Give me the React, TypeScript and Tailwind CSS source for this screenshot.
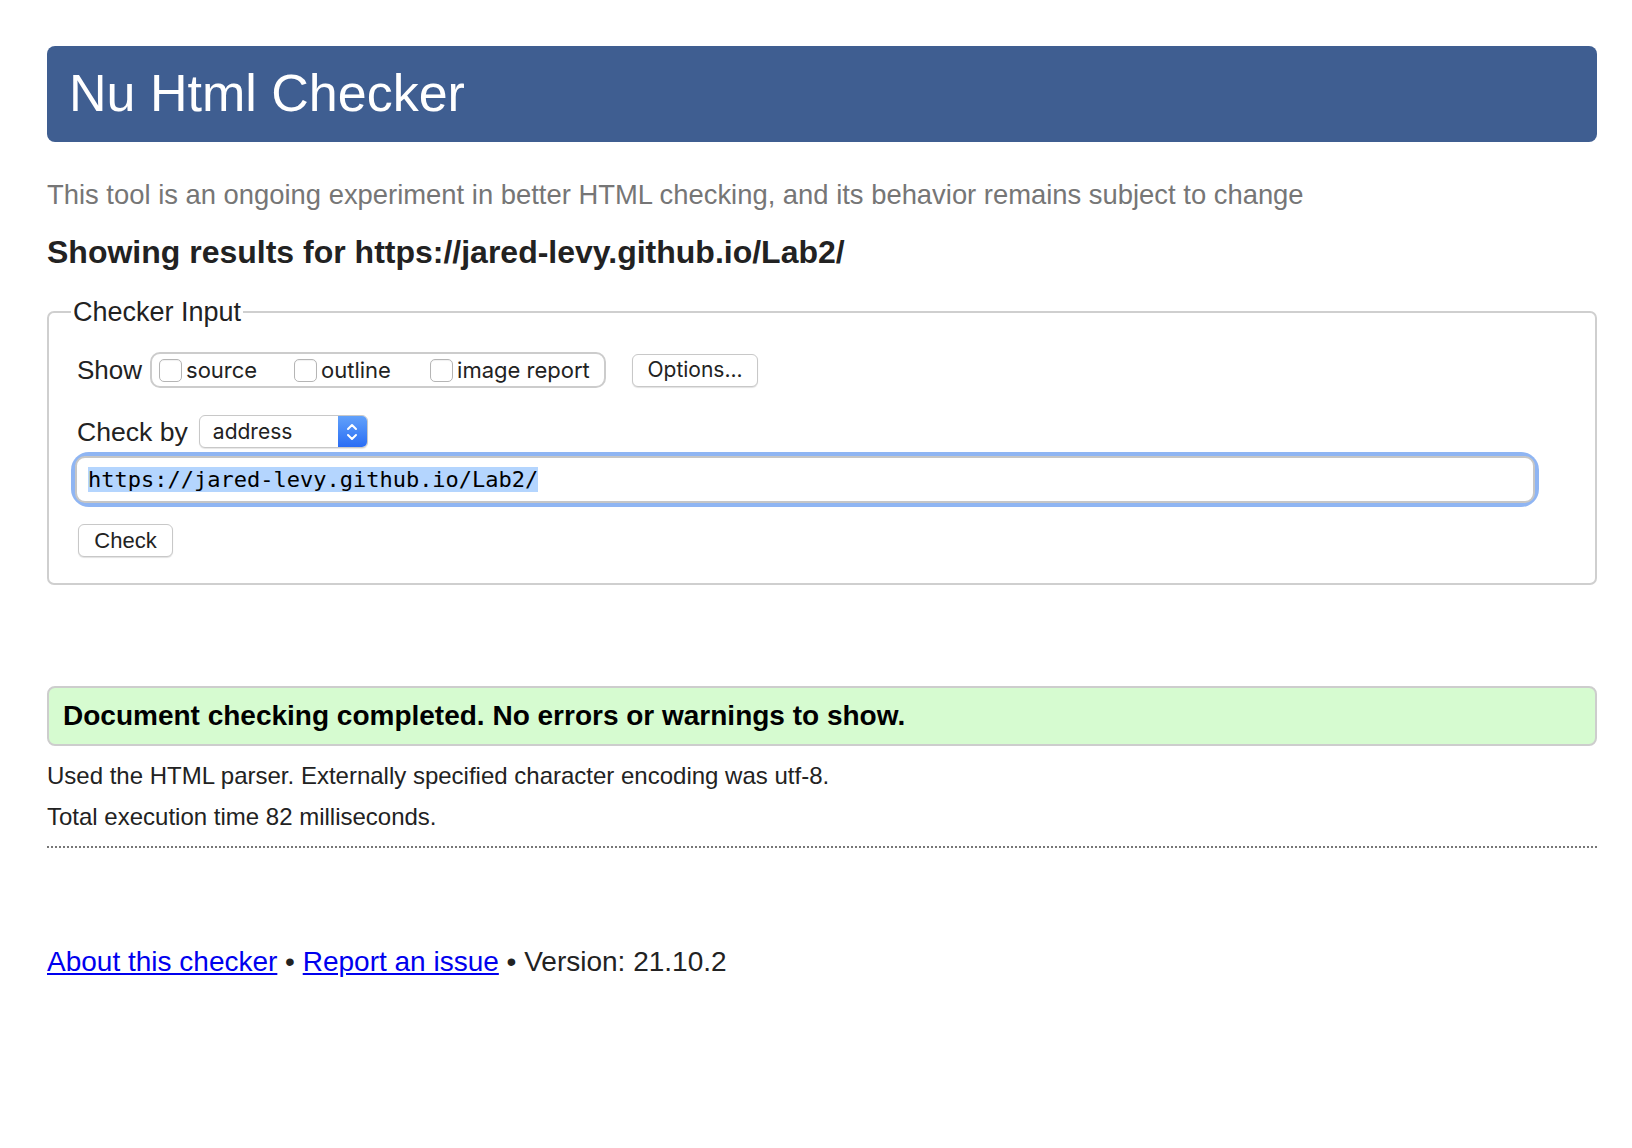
export default function App() {
  return (
    <div className="min-h-[1148px] bg-white font-['Liberation_Sans',Arial,sans-serif] text-[#222]">
      <div className="ml-[47px] mr-[35px] pt-[46px]">
        <header className="flex h-[96px] items-center rounded-[8px] bg-[#3f5e91] pl-[22px] pb-[3px]">
          <h1 className="text-[52px] leading-none text-white">Nu Html Checker</h1>
        </header>

        <p className="mt-[37px] text-[27.4px] leading-[32px] text-[#767676]">
          This tool is an ongoing experiment in better HTML checking, and its behavior remains subject to change
        </p>
        <h2 className="mt-[22px] text-[32px] font-bold leading-[38px] text-[#222]">
          Showing results for https://jared-levy.github.io/Lab2/
        </h2>

        <CheckerInput />

        <div className="mt-[101px] flex h-[60px] items-center rounded-[8px] border-2 border-[#cdcdcd] bg-[#d6fbd0] pl-[14px]">
          <p className="text-[28px] font-bold leading-none text-black">
            Document checking completed. No errors or warnings to show.
          </p>
        </div>
        <p className="mt-[15px] text-[24px] leading-[30px] text-[#222]">
          Used the HTML parser. Externally specified character encoding was utf-8.
        </p>
        <p className="mt-[11px] text-[24px] leading-[30px] text-[#222]">
          Total execution time 82 milliseconds.
        </p>
        <div className="mt-[14px] border-b-2 border-dotted border-[#777]" />

        <p className="mt-[97px] text-[28px] leading-[34px] text-[#222]">
          <a href="#" className="text-[#0000ee] underline">About this checker</a>
          {" • "}
          <a href="#" className="text-[#0000ee] underline">Report an issue</a>
          {" • Version: 21.10.2"}
        </p>
      </div>
    </div>
  );
}

function CheckerInput() {
  return (
    <fieldset className="mt-[25px] rounded-[7px] border-2 border-[#cfcfcf] pl-[28px] pr-[12px] pb-[26px] pt-[24px]">
      <legend className="ml-[-6px] px-[2px] text-[27px] leading-[32px] text-[#222]">Checker Input</legend>

      <div className="flex items-center">
        <span className="text-[26px] leading-[32px]">Show</span>
        <div className="ml-[8px] flex h-[36px] w-[456px] items-center rounded-[10px] border-2 border-[#cccccc] pl-[7px] font-['Inter',sans-serif] text-[22px] text-[#222]">
          <label className="flex w-[135px] items-center gap-[4px]">
            <Checkbox />
            source
          </label>
          <label className="flex w-[136px] items-center gap-[4px]">
            <Checkbox />
            outline
          </label>
          <label className="flex items-center gap-[4px]">
            <Checkbox />
            image report
          </label>
        </div>
        <button className="ml-[26px] flex h-[33px] w-[126px] items-center justify-center rounded-[6px] border border-[#c8c8c8] bg-white font-['Inter',sans-serif] text-[21px] text-[#222] shadow-[0_1px_1px_rgba(0,0,0,0.12)]">
          Options...
        </button>
      </div>

      <div className="mt-[27px] flex items-center">
        <span className="text-[26.6px] leading-[32px]">Check by</span>
        <div className="ml-[11px] flex h-[33px] w-[169px] items-stretch overflow-hidden rounded-[6px] border border-[#c8c8c8] bg-white shadow-[0_1px_1px_rgba(0,0,0,0.1)]">
          <span className="flex flex-1 items-center pl-[13px] font-['Inter',sans-serif] text-[21px] text-[#222]">address</span>
          <span className="flex w-[29px] items-center justify-center bg-gradient-to-b from-[#62a1fa] to-[#2a6cf4]">
            <svg width="12" height="22" viewBox="0 0 12 22" fill="none" stroke="white" strokeWidth="2" strokeLinecap="round" strokeLinejoin="round">
              <path d="M2 8 L6 4 L10 8" />
              <path d="M2 14 L6 18 L10 14" />
            </svg>
          </span>
        </div>
      </div>

      <div className="ml-[-2px] mr-[48px] mt-[8px] rounded-[14px] ring-4 ring-[#8fb5f3]">
        <div className="flex h-[47px] items-center rounded-[10px] border-2 border-[#c6c6c6] bg-white pl-[11px] font-['DejaVu_Sans_Mono',monospace] text-[22px] text-black">
          <span className="bg-[#b4d5fe] leading-[25px]">https://jared-levy.github.io/Lab2/</span>
        </div>
      </div>

      <button className="ml-[1px] mt-[21px] flex h-[33px] w-[95px] items-center justify-center rounded-[6px] border border-[#c8c8c8] bg-white text-[22px] text-[#222] shadow-[0_1px_1px_rgba(0,0,0,0.12)]">
        Check
      </button>
    </fieldset>
  );
}

function Checkbox() {
  return <span className="inline-block h-[23px] w-[23px] shrink-0 rounded-[5px] border border-[#b5b5b5] bg-white shadow-[inset_0_1px_1px_rgba(0,0,0,0.06)]" />;
}
